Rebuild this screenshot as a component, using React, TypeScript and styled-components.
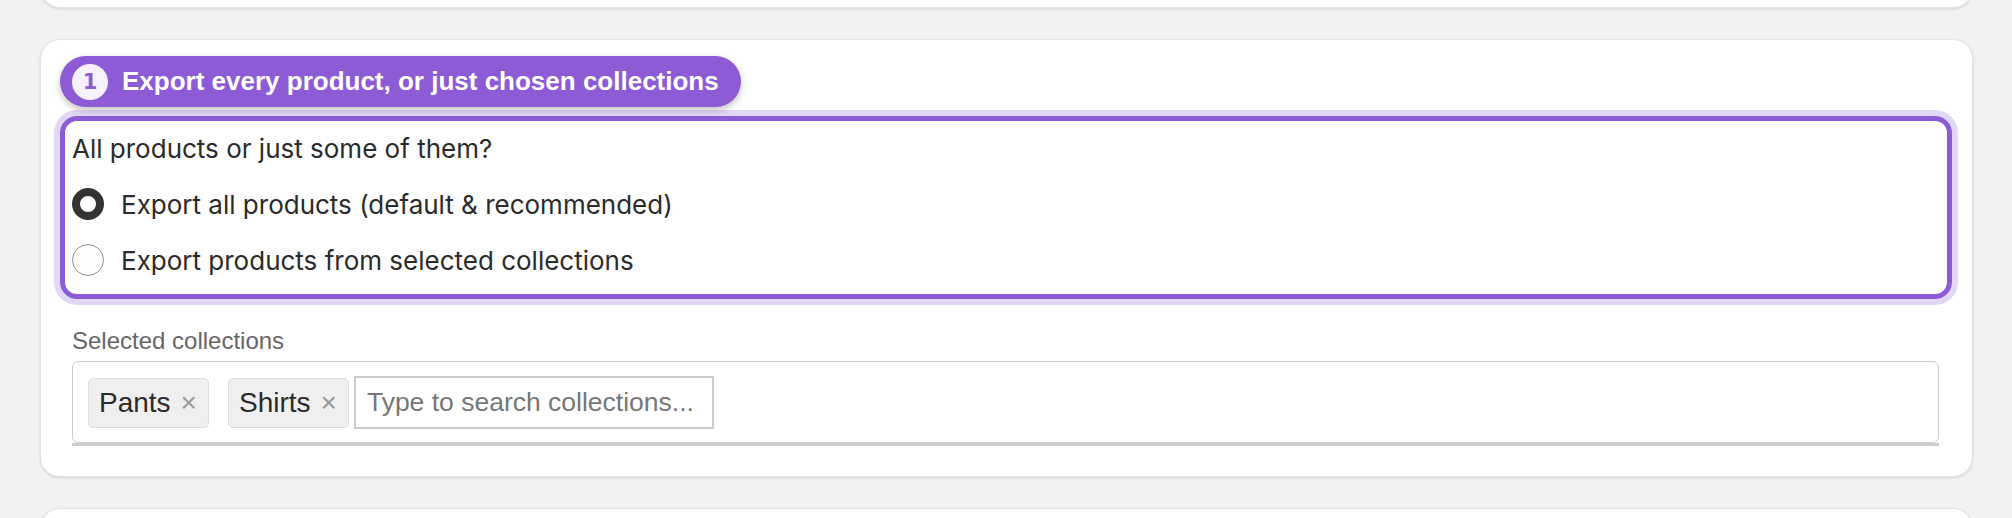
import React from 'react'
import styled, { createGlobalStyle } from 'styled-components'

const GlobalStyle = createGlobalStyle`
  html, body {
    margin: 0;
    padding: 0;
    background: #f1f2f4;
    overflow: hidden;
  }
  * {
    box-sizing: border-box;
  }
`

const purple = '#8c5bd5'

const Page = styled.div`
  display: flex;
  flex-direction: column;
  gap: 31px;
  padding: 0 39px 0 40px;
  height: 518px;
  overflow: hidden;
`

const Card = styled.section`
  flex-shrink: 0;
  background: #ffffff;
  border: 1px solid #e3e4e6;
  border-radius: 20px;
  box-shadow: 0 1px 3px rgba(0, 0, 0, 0.12);
  padding: 16px 20px 30px 19px;
`

// cards above and below the step, cut off by the window
const EdgeCard = styled(Card)<{ $side: 'top' | 'bottom' }>`
  height: 40px;
  padding: 0;
  margin-top: ${p => (p.$side === 'top' ? '-32px' : '0')};
`

const StepPill = styled.div`
  display: inline-flex;
  align-items: center;
  gap: 14px;
  height: 51px;
  padding: 0 22px 0 12px;
  border-radius: 26px;
  background: ${purple};
  box-shadow: 0 3px 7px rgba(0, 0, 0, 0.24);
  color: #ffffff;
  font-family: 'Liberation Sans', Arial, sans-serif;
  font-weight: 700;
  font-size: 26px;
`

const StepNumber = styled.span`
  display: flex;
  align-items: center;
  justify-content: center;
  width: 36px;
  height: 36px;
  border-radius: 50%;
  background: #f7f2fe;
  color: ${purple};
  font-family: 'DejaVu Sans', sans-serif;
  font-weight: 700;
  font-size: 21px;
`

const ChoiceBox = styled.fieldset`
  margin: 9px 0 0;
  padding: 12px 6px 6px 7px;
  border: 5px solid ${purple};
  border-radius: 17px;
  box-shadow: 0 0 0 6px #e2d7f6;
  font-family: Inter, Roboto, sans-serif;
  font-size: 26px;
  color: #2b2b2b;
`

const Question = styled.div`
  margin-bottom: 12px;
  line-height: normal;
`

const RadioRow = styled.label`
  display: flex;
  align-items: center;
  gap: 17px;
  height: 56px;
  cursor: pointer;
`

const Radio = styled.span<{ $checked?: boolean }>`
  flex-shrink: 0;
  width: 32px;
  height: 32px;
  border-radius: 50%;
  background: ${p => (p.$checked ? '#ffffff' : '#fdfdfd')};
  border: ${p => (p.$checked ? '8px solid #333333' : '1px solid #8f8f8f')};
`

const Field = styled.div`
  margin-top: 28px;
  padding: 0 13px 0 12px;
  font-family: 'Liberation Sans', Arial, sans-serif;
`

const FieldLabel = styled.div`
  font-size: 24px;
  color: #666666;
  margin-bottom: 6px;
`

const Underline = styled.div`
  border-bottom: 3px solid #cccccc;
`

const TagBox = styled.div`
  display: flex;
  align-items: center;
  padding: 14px 15px 13px;
  border: 1px solid #cccccc;
  border-radius: 6px;
`

const ChipList = styled.div`
  display: flex;
  gap: 19px;
`

const Chip = styled.span`
  display: inline-flex;
  align-items: center;
  height: 50px;
  padding: 0 11px 0 10px;
  background: #efefef;
  border: 1px solid #dddddd;
  border-radius: 5px;
  font-size: 28px;
  color: #2b2b2b;
`

const ChipRemove = styled.span`
  margin-left: 10px;
  color: #999999;
`

const SearchInput = styled.input`
  margin-left: 5px;
  width: 360px;
  height: 53px;
  padding: 0 11px;
  border: 2px solid #cccccc;
  border-radius: 0;
  font-family: 'Liberation Sans', Arial, sans-serif;
  font-size: 26.5px;
  color: #333333;
  outline: none;

  &::placeholder {
    color: #777777;
  }
`

const collections = ['Pants', 'Shirts']

const App: React.FC = () => {
  return (
    <>
      <GlobalStyle />
      <Page>
        <EdgeCard $side="top" />

        <Card>
          <StepPill>
            <StepNumber>1</StepNumber>
            Export every product, or just chosen collections
          </StepPill>

          <ChoiceBox>
            <Question>All products or just some of them?</Question>
            <RadioRow>
              <Radio $checked />
              Export all products (default &amp; recommended)
            </RadioRow>
            <RadioRow>
              <Radio />
              Export products from selected collections
            </RadioRow>
          </ChoiceBox>

          <Field>
            <FieldLabel>Selected collections</FieldLabel>
            <Underline>
              <TagBox>
                <ChipList>
                  {collections.map(name => (
                    <Chip key={name}>
                      {name}
                      <ChipRemove>×</ChipRemove>
                    </Chip>
                  ))}
                </ChipList>
                <SearchInput placeholder="Type to search collections..." />
              </TagBox>
            </Underline>
          </Field>
        </Card>

        <EdgeCard $side="bottom" />
      </Page>
    </>
  )
}

export default App
